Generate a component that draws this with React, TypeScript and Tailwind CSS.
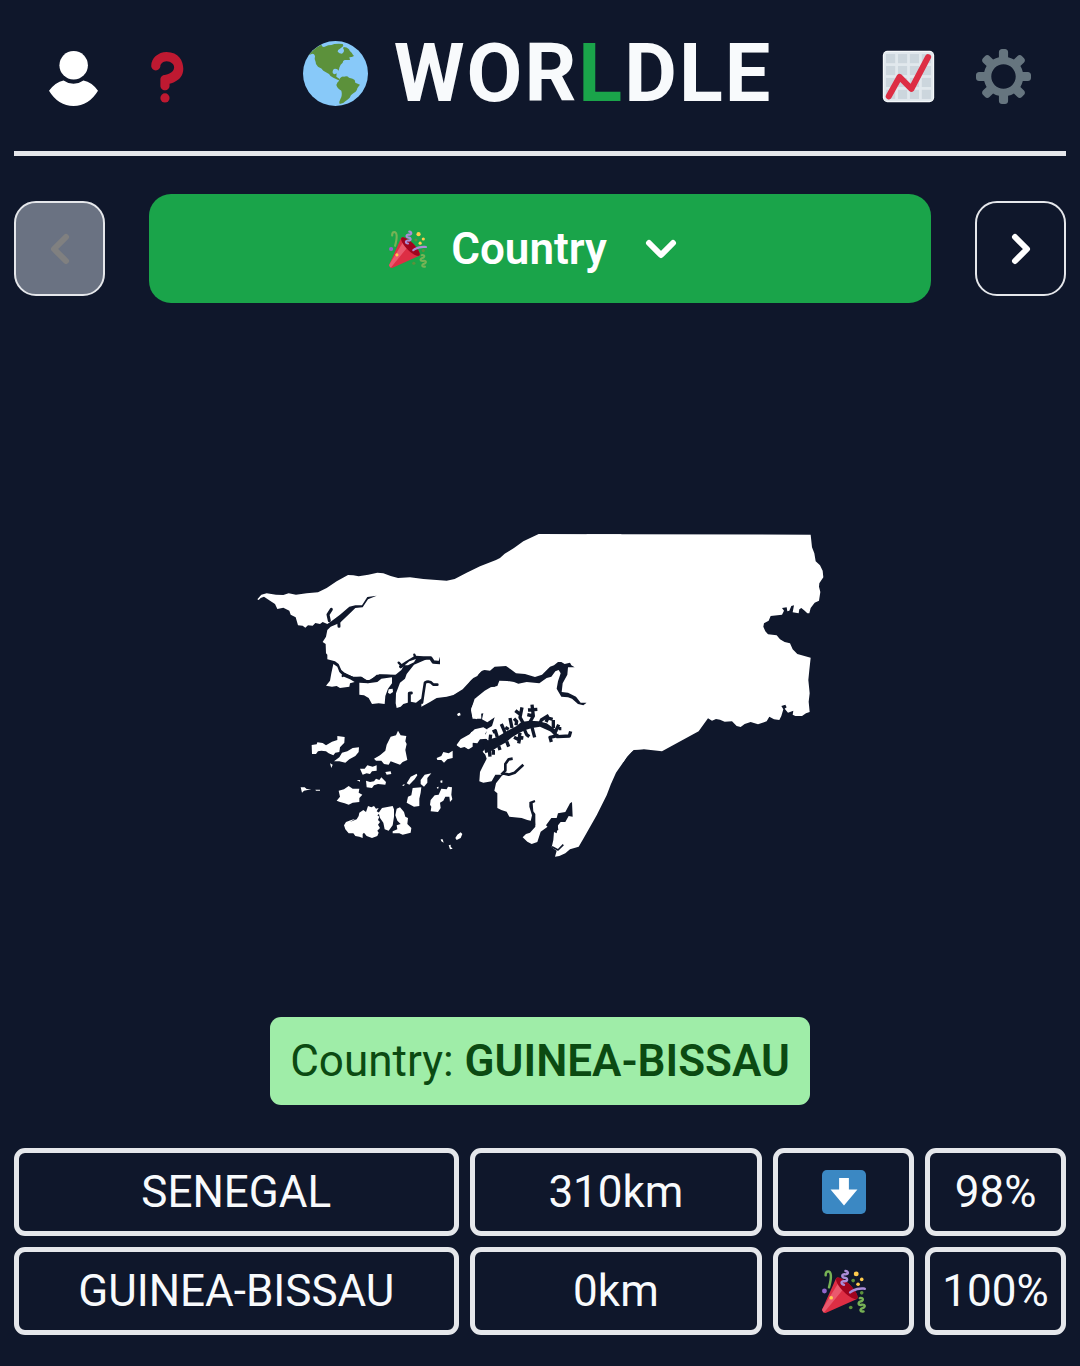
import React from "react";

type IconProps = { className?: string };

function UserIcon({ className }: IconProps) {
  return (
    <svg viewBox="0 0 148 166" className={className} fill="#fff" aria-hidden="true">
      <circle cx="74.500" cy="43" r="43" />
      <path d="M0 120Q19 94 44 89Q58 99 74 99Q90 99 104 89Q130 94 148 120Q120 166 74 166Q28 166 0 120Z" />
    </svg>
  );
}

function QuestionIcon({ className }: IconProps) {
  return (
    <svg viewBox="0 0 36 36" className={className} fill="#BE1931" aria-hidden="true">
      <path d="M17 27c-1.657 0-3-1.343-3-3v-4c0-1.657 1.343-3 3-3 .603-.006 6-1 6-5 0-2-2-4-5-4-2.441 0-4 2-4 3 0 1.657-1.343 3-3 3s-3-1.343-3-3c0-4.878 4.58-9 10-9 8 0 11 5.982 11 11 0 4.145-2.277 7.313-6.413 8.92-.9.351-1.79.587-2.587.747V24c0 1.657-1.343 3-3 3z" />
      <circle cx="17" cy="32" r="3" />
    </svg>
  );
}

function GlobeIcon({ className }: IconProps) {
  return (
    <svg viewBox="69 63 195 195" className={className} aria-hidden="true">
      <circle cx="166.500" cy="160.500" r="97.500" fill="#88C9F9" />
      <g fill="#5C913B">
        <path d="M86 106Q100 86 124 74Q127 82 132 81L145 76Q155 76 163 72Q178 70 188 72Q192 76 188 80Q183 83 180 86Q172 89 173 95Q178 101 186 101Q193 98 192 90Q187 84 191 81Q200 81 207 88Q208 94 215 98Q218 104 222 108Q216 112 208 112L210 120L194 120Q188 122 188 128Q181 132 178 143L176 152L172 148Q162 144 159 151Q155 161 164 163L170 160L169 170L180 178L176 181L160 173Q150 169 147 162L130 152Q126 144 114 140Q106 134 107 126Q102 118 105 108Q102 100 95 102Z" />
        <path d="M180 175Q186 167 192 170Q202 167 207 173Q220 175 224 180L226 188L240 194Q234 200 232 205Q230 216 218 221Q212 224 209 233Q202 239 196 244Q190 252 179 252Q176 246 181 238Q188 226 184 212Q172 206 169 195Q172 186 176 184Z" />
      </g>
    </svg>
  );
}

function ChartIcon({ className }: IconProps) {
  const cells = [3.3, 11.1, 18.9, 26.7];
  return (
    <svg viewBox="0 0 36 36" className={className} aria-hidden="true">
      <rect x="1.200" y="1.200" width="33.600" height="33.600" rx="3" fill="#F5F8FA" />
      <rect x="2" y="2" width="32" height="32" rx="2" fill="#E1E8ED" />
      {cells.map((y) =>
        cells.map((x) => <rect key={`${x}-${y}`} x={x} y={y} width="6" height="6" fill="#CCD6DD" />)
      )}
      <path d="M5.100 30.900L12.100 18.300L19.900 26.100L30.800 5.300" fill="none" stroke="#DD2E44" strokeWidth="4" strokeLinecap="round" strokeLinejoin="round" />
    </svg>
  );
}

function GearIcon({ className }: IconProps) {
  return (
    <svg viewBox="0 0 36 36" className={className} fill="#66757F" aria-hidden="true">
      <path d="M34 15h-3.362c-.324-1.369-.864-2.651-1.582-3.814l2.379-2.379c.781-.781.781-2.048 0-2.829l-1.414-1.414c-.781-.781-2.047-.781-2.828 0l-2.379 2.379C23.65 6.225 22.369 5.686 21 5.362V2c0-1.104-.896-2-2-2h-2c-1.104 0-2 .896-2 2v3.362c-1.369.324-2.651.864-3.814 1.582L8.808 4.565c-.781-.781-2.048-.781-2.828 0L4.565 5.979c-.781.781-.781 2.048-.001 2.829l2.379 2.379C6.225 12.35 5.686 13.632 5.362 15H2c-1.104 0-2 .896-2 2v2c0 1.104.896 2 2 2h3.362c.324 1.368.864 2.65 1.582 3.813l-2.379 2.379c-.78.78-.78 2.048.001 2.829l1.414 1.414c.78.78 2.047.78 2.828 0l2.379-2.379c1.163.719 2.445 1.258 3.814 1.582V34c0 1.104.896 2 2 2h2c1.104 0 2-.896 2-2v-3.362c1.368-.324 2.65-.864 3.813-1.582l2.379 2.379c.781.781 2.047.781 2.828 0l1.414-1.414c.781-.781.781-2.048 0-2.829l-2.379-2.379c.719-1.163 1.258-2.445 1.582-3.814H34c1.104 0 2-.896 2-2v-2C36 15.896 35.104 15 34 15zM18 26c-4.418 0-8-3.582-8-8s3.582-8 8-8 8 3.582 8 8-3.582 8-8 8z" />
    </svg>
  );
}

function PartyIcon({ className }: IconProps) {
  return (
    <svg viewBox="0 0 36 36" className={className} role="img" aria-label="Correct">
      <path fill="#DD2E44" d="M11.626 7.488c-.112.112-.197.247-.268.395l-.008-.008L.134 33.141l.011.011c-.208.403.14 1.223.853 1.937.713.713 1.533 1.061 1.936.853l.01.01L28.21 24.735l-.008-.009c.147-.07.282-.155.395-.269 1.562-1.562-.971-6.627-5.656-11.313-4.687-4.686-9.752-7.218-11.315-5.656z" />
      <path fill="#EA596E" d="M13 12L.416 32.506l-.282.635.011.011c-.208.403.14 1.223.853 1.937.232.232.473.408.709.557L17 17l-4-5z" />
      <path fill="#A0041E" d="M23.012 13.066c4.67 4.672 7.263 9.652 5.789 11.124-1.473 1.474-6.453-1.118-11.126-5.788-4.671-4.672-7.263-9.654-5.79-11.127 1.474-1.473 6.454 1.119 11.127 5.791z" />
      <path fill="#AA8DD8" d="M18.59 13.609c-.199.161-.459.245-.734.215-.868-.094-1.598-.396-2.109-.873-.541-.505-.808-1.183-.735-1.862.128-1.192 1.324-2.286 3.363-2.066.793.085 1.147-.17 1.159-.292.014-.121-.277-.446-1.07-.532-.868-.094-1.598-.396-2.11-.873-.541-.505-.809-1.183-.735-1.862.13-1.192 1.325-2.286 3.362-2.065.578.062.883-.057 1.012-.134.103-.063.144-.123.148-.158.012-.121-.275-.446-1.07-.532-.549-.06-.947-.552-.886-1.102.059-.549.55-.946 1.101-.886 2.037.219 2.973 1.542 2.844 2.735-.13 1.194-1.325 2.286-3.364 2.067-.578-.063-.88.057-1.01.134-.103.062-.145.123-.149.157-.013.122.276.446 1.071.532 2.037.22 2.973 1.542 2.844 2.735-.129 1.192-1.324 2.286-3.362 2.065-.578-.062-.882.058-1.012.134-.104.064-.144.124-.148.158-.013.121.276.446 1.07.532.548.06.947.553.886 1.102-.028.274-.167.511-.366.671z" />
      <path fill="#77B255" d="M30.661 22.857c1.973-.557 3.334.323 3.658 1.478.324 1.154-.378 2.615-2.35 3.17-.77.216-1.001.584-.97.701.034.118.425.312 1.193.095 1.972-.555 3.333.325 3.657 1.479.326 1.155-.378 2.614-2.351 3.17-.769.216-1.001.585-.967.702.033.117.423.311 1.192.095.53-.149 1.084.16 1.233.691.148.532-.161 1.084-.693 1.234-1.971.555-3.333-.323-3.659-1.479-.324-1.154.379-2.613 2.353-3.169.77-.217 1.001-.584.967-.702-.032-.117-.422-.312-1.19-.096-1.974.556-3.334-.322-3.659-1.479-.325-1.154.378-2.613 2.351-3.17.768-.215.999-.585.967-.701-.034-.118-.423-.312-1.192-.096-.532.15-1.083-.16-1.233-.691-.149-.53.161-1.082.693-1.232z" />
      <path fill="#AA8DD8" d="M23.001 20.16c-.294 0-.584-.129-.782-.375-.345-.432-.274-1.061.156-1.406.218-.175 5.418-4.259 12.767-3.208.547.078.927.584.849 1.131-.078.546-.58.93-1.132.848-6.493-.922-11.187 2.754-11.233 2.791-.186.148-.406.219-.625.219z" />
      <path fill="#77B255" d="M5.754 16c-.095 0-.192-.014-.288-.042-.529-.159-.829-.716-.67-1.245 1.133-3.773 2.16-9.794.898-11.364-.141-.178-.354-.353-.842-.316-.938.072-.849 2.051-.848 2.071.042.551-.372 1.031-.922 1.072-.559.034-1.031-.372-1.072-.923-.103-1.379.326-4.035 2.692-4.214 1.056-.08 1.933.287 2.552 1.057 2.371 2.951-.036 11.506-.542 13.192-.13.433-.528.712-.958.712z" />
      <circle fill="#5C913B" cx="25.500" cy="9.500" r="1.500" />
      <circle fill="#9266CC" cx="2" cy="18" r="2" />
      <circle fill="#5C913B" cx="32.500" cy="19.500" r="1.500" />
      <circle fill="#5C913B" cx="23.500" cy="31.500" r="1.500" />
      <circle fill="#FFCC4D" cx="28" cy="4" r="2" />
      <circle fill="#FFCC4D" cx="32.500" cy="8.500" r="1.500" />
      <circle fill="#FFCC4D" cx="29.500" cy="12.500" r="1.500" />
      <circle fill="#FFCC4D" cx="7.500" cy="23.500" r="1.500" />
    </svg>
  );
}

function DownIcon({ className }: IconProps) {
  return (
    <svg viewBox="0 0 36 36" className={className} role="img" aria-label="South">
      <rect width="36" height="36" rx="4" fill="#3B88C3" />
      <path d="M14 6.500h8v9.500h7L18 29L7 16h7z" fill="#fff" />
    </svg>
  );
}

function Chevron({ d, className, viewBox }: { d: string; className?: string; viewBox: string }) {
  return (
    <svg viewBox={viewBox} className={className} fill="none" stroke="currentColor" strokeWidth="6" strokeLinecap="round" strokeLinejoin="round" aria-hidden="true">
      <path d={d} />
    </svg>
  );
}

function GuineaBissauMap({ className }: IconProps) {
  return (
    <svg viewBox="768 1596 1704 981" className={className} role="img" aria-label="Country outline">
      <g fill="#fff">
        {/* Northwest coast and Cacheu river */}
        <g transform="translate(720 1560)">
          <path d="M52 238L64 224L80 220L108 224L130 225L146 220L168 224L200 220L234 217L260 204L290 184L324 165L340 166L356 169L385 164L412 158L430 160L452 168L474 174L510 172L550 177L590 180L620 182L644 177L680 158L720 139L768 120L780 114L794 101L822 84L850 64L896 42L1144 43V420H760L718 460L700 470L686 488L668 508L640 525L620 530L590 534L570 546L544 560L545 535L528 548L512 545L503 548L490 552L482 560L470 564L467 550L468 520L480 488L495 476L500 462L522 434L560 418L545 414L520 418L495 432L484 450L465 466L440 464L410 464L392 480L378 480L365 470L340 470L318 462L304 450L296 432L285 424L262 418L262 404L258 400L257 372L248 366L258 350L262 330L272 320L300 308L330 280L346 264L368 262L384 238L410 227L382 231L366 256L346 256L328 260L300 284L274 304L262 312L248 306L240 312L226 309L218 317L204 316L196 323L188 317L174 316L167 292L152 284L148 272L130 263L112 267L105 252L90 242L72 230L62 234L56 240Z" />
          <path d="M280 432L292 440L298 456L312 470L330 478L344 486L330 490L328 500L300 504L290 498L276 500L258 497L270 482L274 460Z" />
          <path d="M358 488L384 490L412 486L424 476L456 472L456 490L444 506L436 528L434 552L416 550L396 552L386 534L372 526L358 524Z" />
          <path d="M446 508L458 506L459 516L450 522L444 518Z" />
          <path d="M693 570L704 536L722 526L724 596L698 596Z" />
          <path d="M652 582L660 578L662 586L654 588Z" />
          <g fill="none" stroke="#0f172a" strokeWidth="8" strokeLinejoin="round" strokeLinecap="round">
            <path d="M274 268L264 284L268 302M296 302L297 319" strokeWidth="9" />
            <path d="M508 550V520L514 519" strokeWidth="9" />
            <path d="M546 548L550 520L555 488Q568 480 580 494L592 494" />
            <path d="M482 440L500 428L526 412L550 414L572 414L580 426L600 428L604 414" strokeWidth="10" />
            <path d="M476 428L486 438M523 404L526 412M308 468L314 462L340 475L362 474L384 486L420 466L466 468" strokeWidth="7" />
          </g>
          <path d="M494 436L508 424L528 417L522 427L504 436Z" />
        </g>

        {/* Eastern border */}
        <g transform="translate(1860 1560)">
          <path d="M-4 43L572 44L576 82L583 100L587 124L600 136L608 152L610 172L598 190L597 200L601 216L597 242L584 248L572 264L568 280L562 280L554 272L544 264L538 268L536 280L518 277L522 256L514 258L508 272L502 274L500 262L486 264L492 272L486 284L452 288L446 302L432 310L430 320L436 334L444 343L470 346L480 358L494 366L510 370L518 388L532 402L572 413L568 450L565 480L569 520L566 545L569 576L558 580L546 588L526 588L518 584L520 572L504 578L494 566L500 562L496 554L484 558L490 568L484 588L478 600L462 598L448 590L440 604L414 613L392 606L374 612L362 621L350 618L336 604L314 605L300 599L288 597L276 602L264 595L236 634L126 694L72 688L42 689L26 702L10 726L-100 720V43Z" />
        </g>

        {/* South, Geba estuary to Cacine */}
        <g transform="translate(1320 1920)">
          <path d="M0 0V170L22 168L42 163L60 150L76 135L100 114L112 108L122 93L134 90L150 92L164 80L198 78L212 88L228 100L255 102L285 111L306 104L318 92L330 80L342 76L354 66L364 66L374 72L390 68L394 76L404 82L384 82L382 104L368 130L365 156L384 158L408 170L422 188L440 188L430 196L414 192L396 176L384 172L364 170L350 146L354 124L362 100L356 90L346 94L334 110L320 114L298 130L260 126L235 131L222 126L202 123L178 122L172 138L152 142L134 152L110 172L94 205L97 230L110 238L118 222L130 220L126 238L142 247L164 232L156 258L142 266L135 292L150 308L128 335L136 344L140 356L130 376L120 396L118 424L130 428L155 424L166 404L188 404L168 430L163 452L172 460L172 504L184 510L200 515L208 530L245 534L262 540L285 545L286 560L270 578L258 582L248 592L262 605L275 612L292 606L302 575L330 555L352 550L355 570L342 575L340 600L335 622L350 632L345 650L358 648L376 640L390 628L416 620L430 596L470 526L500 466L512 434L528 398L560 352L580 330L620 326V0Z" />
          <path d="M50 314L62 298L90 282L104 268L130 262L144 270L136 280L142 296L120 298L112 310L98 308L98 320L86 328L72 320L60 322Z" />
          <g fill="#0f172a">
            <path d="M128 310L150 298L170 292L200 274L230 258L244 246L270 242L296 244L320 250L340 264L352 274L346 284L330 274L300 260L276 264L256 270L236 280L216 292L196 308L178 318L160 330L136 340Z" />
            <path d="M272 544L276 526L268 500V486L284 480L286 486L278 490L280 514L286 522V556L276 556Z" />
            <path d="M318 556L334 534L350 534L354 520L376 516L390 490L396 486L398 530L386 528L376 546L362 546L354 556L350 580L334 572Z" />
          </g>
          <g fill="none" stroke="#0f172a" strokeWidth="10" strokeLinejoin="round">
            <path d="M250 250L240 232L246 202M226 212L242 224M270 246L280 228L276 194M264 210L292 208M280 228L262 224M216 264L210 234M196 280L184 252M172 292L166 272L158 276M150 300L152 284M206 268L196 262M228 256L230 244L222 236M300 250L304 240L326 226M318 246L324 234L338 238M340 264L340 240M346 276L356 254M334 268L352 290L388 288L392 274M356 286L330 292L334 306M356 266L364 266M252 266L260 284L268 290M276 262L284 292M240 278L238 292L250 294M222 292L238 300L236 310M200 304L206 320M176 318L180 330M160 330V344M148 332L150 350" />
            <path d="M184 404L196 392V372L206 358L218 356M190 400L206 404L224 398L250 374" strokeWidth="8" />
            <path d="M336 620L354 630L370 614" strokeWidth="5" />
          </g>
          <path d="M148 128L158 122L170 126L164 138L150 138Z" fill="none" stroke="#0f172a" strokeWidth="4" />
        </g>

        {/* Bijagos archipelago */}
        <g transform="translate(870 2100)">
          <path d="M65 135L80 133L82 127L98 129L108 136L126 125L142 120L142 108L164 111L163 128L150 142L148 156L136 158L130 166L116 160L108 154L94 152L84 154L78 162L66 162Z" />
          <path d="M132 184L148 172L156 158L172 154L188 144L207 142L206 156L196 168L178 178L166 188L148 184Z" />
          <path d="M120 190L128 194L124 204Z" />
          <path d="M252 176L270 166L286 152L290 134L302 110L318 106L324 92L332 106L349 108L346 124L350 132L346 150L352 180L338 186L330 194L314 188L302 184L296 194L282 192L274 182L258 182Z" />
          <path d="M210 206L224 206L232 196L248 200L260 196L260 212L246 214L240 222L230 220L218 224Z" />
          <path d="M286 216L302 214L304 222L290 224Z" />
          <path d="M228 242L240 246L252 244L258 236L268 240L274 232L288 246L286 254L264 252L252 256L246 264L230 262Z" />
          <path d="M200 240L210 240L210 245ZM32 262L44 262L50 267L64 268L42 272L36 278ZM76 269L90 269V272H78ZM336 256L344 252L342 258Z" />
          <path d="M140 302L150 290L146 272L162 268L176 258L188 266L208 266L206 278L217 284L208 294V306L188 308L176 314L164 310L150 306Z" />
          <path d="M162 376L168 366L184 360L196 356L180 366L200 358L206 348L208 338L220 330L228 336L234 318L244 322L252 318L258 326L266 324L260 334L270 340L262 346L268 350L264 360L270 366L264 374L270 384L262 392L266 398L262 408L246 414L230 408L222 398L218 402L218 414L208 410L196 408L190 400L176 400L166 388Z" />
          <path d="M266 338L276 324L308 318L312 328L312 350L308 376L296 392L284 388L280 368L270 354Z" />
          <path d="M320 326L330 322L342 336L346 350L354 354L352 372L364 384L362 398L338 404L328 400L308 400L308 394L322 388L320 376L332 372L322 362L316 346Z" />
          <path d="M350 308L354 290L364 286L368 264L394 262L392 278L388 296V318L372 320Z" />
          <path d="M350 250L362 230L380 221L382 226L374 238L358 254ZM392 240L404 224L424 220L412 234V248L402 260L392 252Z" />
          <path d="M422 300L434 286L446 284L454 266L470 268L474 260L486 262L484 284L487 298L480 306L478 290L466 290L460 302L450 308L452 324L444 336L422 334L424 320L420 314Z" />
          <path d="M440 174L454 168L460 156L476 160L488 152L488 174L472 178L462 188L454 180L442 180Z" />
          <path d="M500 136L516 124L538 106L544 96L556 92L574 86V112L558 118L546 130V140L532 146L526 140L512 144Z" />
          <path d="M502 42L508 38L510 44L504 48ZM451 242L457 241V248H452ZM440 262L446 260L444 268ZM452 418L458 418L461 428L454 424ZM496 414L502 404L512 397L517 402L512 414L500 420ZM476 436L482 434V440L488 446L480 448Z" />
        </g>
      </g>
    </svg>
  );
}

const guesses = [
  { country: "SENEGAL", distance: "310km", hit: false, proximity: "98%" },
  { country: "GUINEA-BISSAU", distance: "0km", hit: true, proximity: "100%" },
];

const cell = "flex h-[88px] items-center justify-center rounded-[11px] border-[5px] border-gray-200";

export default function App() {
  return (
    <div className="min-h-screen bg-slate-900 px-3.5 pb-6 font-[Roboto,sans-serif] text-[44px] leading-[60px] text-slate-50">
      <header className="flex h-[156px] items-center justify-between border-b-[5px] border-gray-200 px-[35px] pt-0.5">
        <div className="flex items-center gap-[41px]">
          <button type="button" aria-label="Profile">
            <UserIcon className="mt-1 block h-[55px] w-[49px]" />
          </button>
          <button type="button" aria-label="How to play">
            <QuestionIcon className="block size-[55px]" />
          </button>
        </div>
        <h1 className="flex items-center gap-[26px] pb-1.5 text-[81px] leading-none font-bold tracking-wide">
          <GlobeIcon className="size-[65px]" />
          <span>
            WOR<span className="text-[#1aa44a]">L</span>DLE
          </span>
        </h1>
        <div className="flex items-center gap-10">
          <button type="button" aria-label="Statistics">
            <ChartIcon className="block size-[55px]" />
          </button>
          <button type="button" aria-label="Settings">
            <GearIcon className="block size-[55px]" />
          </button>
        </div>
      </header>

      <main>
        <nav className="mt-[38px] flex items-center gap-11">
          <button type="button" disabled aria-label="Previous round" className="flex h-[95px] w-[91px] items-center justify-center rounded-[22px] border-2 border-gray-200 bg-gray-500 text-[#808080]">
            <Chevron viewBox="0 0 20 32" d="M16 4L4 16L16 28" className="h-8 w-5" />
          </button>
          <button type="button" className="flex h-[109px] flex-1 items-center justify-center rounded-[22px] bg-[#1aa44a] font-semibold text-white">
            <PartyIcon className="size-[38px]" />
            <span className="ml-6">Country</span>
            <Chevron viewBox="0 0 32 20" d="M4 4L16 16L28 4" className="mr-3.5 ml-[38px] h-5 w-8" />
          </button>
          <button type="button" aria-label="Next round" className="flex h-[95px] w-[91px] items-center justify-center rounded-[22px] border-2 border-gray-200 text-white">
            <Chevron viewBox="0 0 20 32" d="M4 4L16 16L4 28" className="h-8 w-5" />
          </button>
        </nav>

        <div className="flex h-[714px] items-center justify-center pt-[70px]">
          <GuineaBissauMap className="block w-[568px]" />
        </div>

        <p className="mx-auto flex h-[88px] w-fit items-center rounded-[11px] bg-[#9feda8] px-5 text-[#0b4a12]">
          <span>
            Country: <strong className="font-semibold">GUINEA-BISSAU</strong>
          </span>
        </p>

        <ul className="mt-[43px] flex flex-col gap-[11px]">
          {guesses.map((g) => (
            <li key={g.country} className="grid grid-cols-7 gap-[11px]">
              <div className={`${cell} col-span-3`}>{g.country}</div>
              <div className={`${cell} col-span-2`}>{g.distance}</div>
              <div className={cell}>{g.hit ? <PartyIcon className="size-11" /> : <DownIcon className="size-11" />}</div>
              <div className={cell}>{g.proximity}</div>
            </li>
          ))}
        </ul>
      </main>
    </div>
  );
}
